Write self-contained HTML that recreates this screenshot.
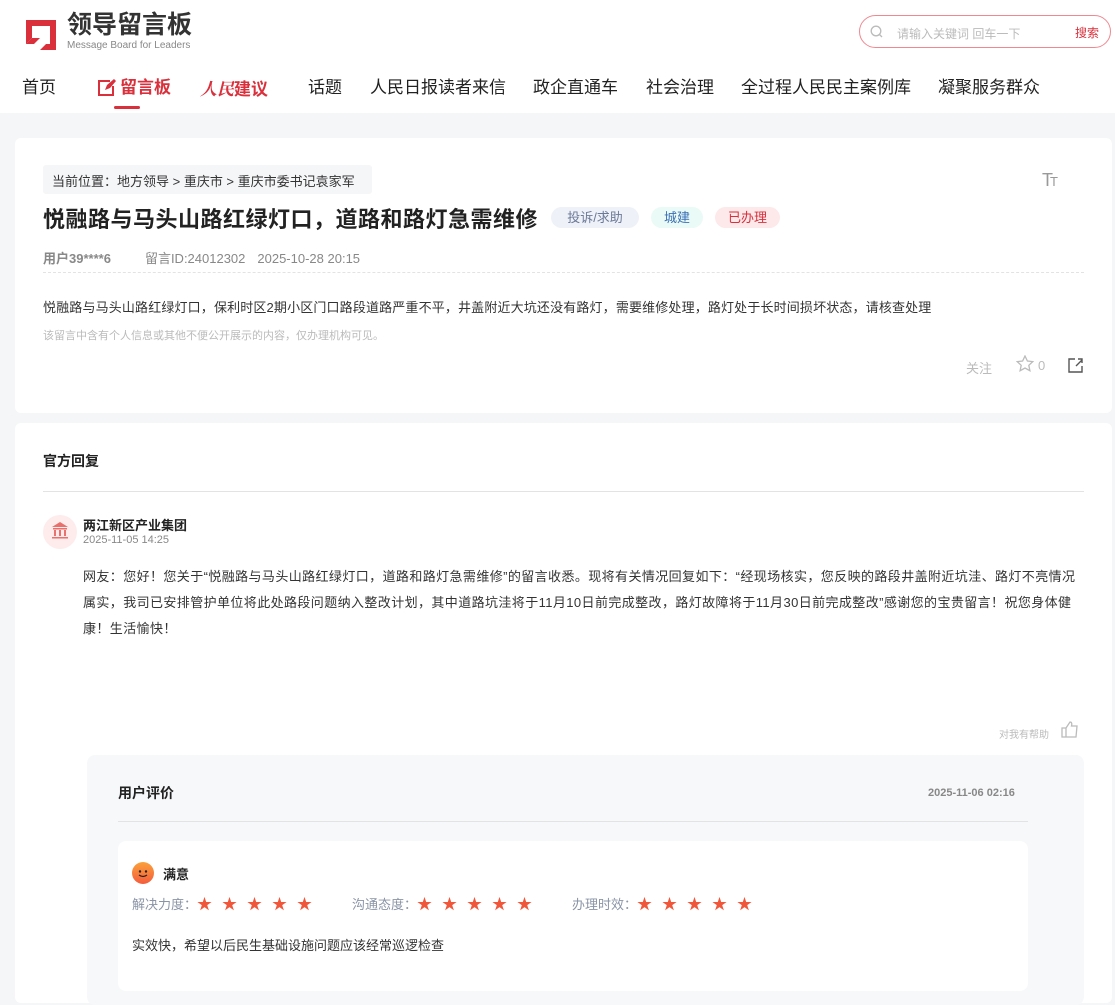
<!DOCTYPE html>
<html><head><meta charset="utf-8"><style>
*{margin:0;padding:0;box-sizing:border-box}
body{width:1115px;height:990px;overflow:hidden;background:#f5f6f8;font-family:"Liberation Sans","Noto Sans CJK SC",sans-serif;color:#333;position:relative}
.abs{position:absolute;white-space:nowrap}
.hdr{position:absolute;left:0;top:0;width:1115px;height:113px;background:#fff}
.nav{font-size:17px;color:#222;top:78px;line-height:20px}
.card{position:absolute;background:#fff;border-radius:6px}
.tag{position:absolute;top:207px;height:21px;border-radius:11px;font-size:13px;line-height:21px;text-align:center}
.star{color:#f0563a;font-size:15px;letter-spacing:10px}
</style></head><body>
<div class="hdr">
<svg class="abs" style="left:22px;top:14px" width="36" height="36" viewBox="0 0 36 36"><path d="M4 6h30v30H18l6-6h4V12H10v12l-6 6z" fill="#d9303c"/><path d="M4 30l6-6h8l-6 6z" fill="#d9303c"/></svg>
<div class="abs" style="left:67px;top:10px;font-size:25px;line-height:30px;font-weight:bold;color:#333">领导留言板</div>
<div class="abs" style="left:67px;top:40px;font-size:10px;line-height:12px;color:#888">Message Board for Leaders</div>
<div class="abs" style="left:859px;top:15px;width:252px;height:33px;border:1px solid #f08890;border-radius:17px"></div>
<svg class="abs" style="left:870px;top:25px" width="13" height="13" viewBox="0 0 13 13"><circle cx="6" cy="6" r="4.8" fill="none" stroke="#bbb" stroke-width="1.3"/><path d="M9.5 9.5l2.5 2.5" stroke="#bbb" stroke-width="1.3"/></svg>
<div class="abs" style="left:897px;top:25px;font-size:12px;color:#bbb">请输入关键词 回车一下</div>
<div class="abs" style="left:1075px;top:24px;font-size:12px;color:#d9303c">搜索</div>
<div class="abs nav" style="left:22px">首页</div>
<svg class="abs" style="left:97px;top:78px" width="21" height="19" viewBox="0 0 21 19"><path d="M13 3H2v14h14V8" fill="none" stroke="#d9303c" stroke-width="2"/><path d="M8 12l2-5 7-6 2 2-6 7z" fill="#d9303c"/></svg>
<div class="abs nav" style="left:120px;color:#d9303c;font-weight:bold">留言板</div>
<div class="abs" style="left:114px;top:106px;width:26px;height:3px;border-radius:2px;background:#d9303c"></div>
<div class="abs nav" style="left:200px;color:#d9303c;font-weight:bold;font-style:italic;font-family:'Noto Serif CJK SC',serif">人民<span style="font-family:'Noto Sans CJK SC',sans-serif;font-style:normal">建议</span></div>
<div class="abs nav" style="left:308px">话题</div>
<div class="abs nav" style="left:370px">人民日报读者来信</div>
<div class="abs nav" style="left:533px">政企直通车</div>
<div class="abs nav" style="left:646px">社会治理</div>
<div class="abs nav" style="left:741px">全过程人民民主案例库</div>
<div class="abs nav" style="left:938px">凝聚服务群众</div>
</div>

<div class="card" style="left:15px;top:138px;width:1097px;height:275px"></div>
<div class="abs" style="left:43px;top:165px;width:329px;height:29px;background:#f5f6f8;border-radius:3px"></div>
<div class="abs" style="left:52px;top:171px;font-size:13px;color:#333">当前位置：地方领导 &gt; 重庆市 &gt; 重庆市委书记袁家军</div>
<div class="abs" style="left:1042px;top:170px;font-size:18px;color:#999;letter-spacing:-3px">T<span style="font-size:13px">T</span></div>
<div class="abs" style="left:43px;top:202px;font-size:22px;font-weight:bold;color:#222;letter-spacing:0.5px">悦融路与马头山路红绿灯口，道路和路灯急需维修</div>
<div class="tag" style="left:551px;width:88px;background:#eef1f7;color:#6b7a99">投诉/求助</div>
<div class="tag" style="left:651px;width:52px;background:#eafaf7;color:#3b6fb6">城建</div>
<div class="tag" style="left:715px;width:65px;background:#fde8ea;color:#d9303c">已办理</div>
<div class="abs" style="left:43px;top:248px;font-size:13px;color:#888"><b>用户39****6</b><span style="margin-left:34px">留言ID:24012302</span><span style="margin-left:12px">2025-10-28 20:15</span></div>
<div class="abs" style="left:43px;top:272px;width:1041px;border-top:1px dashed #e3e3e3"></div>
<div class="abs" style="left:43px;top:297px;font-size:13px;color:#333;letter-spacing:0.15px">悦融路与马头山路红绿灯口，保利时区2期小区门口路段道路严重不平，井盖附近大坑还没有路灯，需要维修处理，路灯处于长时间损坏状态，请核查处理</div>
<div class="abs" style="left:43px;top:327px;font-size:11px;color:#bbb">该留言中含有个人信息或其他不便公开展示的内容，仅办理机构可见。</div>
<div class="abs" style="left:966px;top:358px;font-size:13px;color:#bbb">关注</div>
<svg class="abs" style="left:1016px;top:355px" width="18" height="17" viewBox="0 0 18 17"><path d="M9 1l2.4 5 5.4.6-4 3.7 1.1 5.4L9 13l-4.9 2.7 1.1-5.4-4-3.7 5.4-.6z" fill="none" stroke="#bbb" stroke-width="1.3"/></svg>
<div class="abs" style="left:1038px;top:358px;font-size:13px;color:#bbb">0</div>
<svg class="abs" style="left:1067px;top:357px" width="16" height="16" viewBox="0 0 16 16"><path d="M8 2H2v13h13V9M9 9l6-6M11 2h4v4" fill="none" stroke="#555" stroke-width="1.4"/></svg>

<div class="card" style="left:15px;top:423px;width:1097px;height:580px"></div>
<div class="abs" style="left:43px;top:451px;font-size:14px;font-weight:bold;color:#222">官方回复</div>
<div class="abs" style="left:43px;top:491px;width:1041px;border-top:1px solid #e3e3e3"></div>
<div class="abs" style="left:43px;top:515px;width:34px;height:34px;border-radius:50%;background:#fdeceb"></div>
<svg class="abs" style="left:50px;top:520px" width="20" height="20" viewBox="0 0 20 20"><path d="M10 2L2 7h16z M3 8h14v1.5H3z M4 10h2v6H4z M9 10h2v6H9z M14 10h2v6h-2z M2 17h16v1.5H2z" fill="#e9706c"/></svg>
<div class="abs" style="left:83px;top:515px;font-size:13px;font-weight:bold;color:#222">两江新区产业集团</div>
<div class="abs" style="left:83px;top:534px;font-size:11px;color:#888">2025-11-05 14:25</div>
<div class="abs" style="left:83px;top:564px;width:1004px;white-space:normal;font-size:13px;line-height:26px;color:#333;letter-spacing:0.4px">网友：您好！您关于“悦融路与马头山路红绿灯口，道路和路灯急需维修”的留言收悉。现将有关情况回复如下：“经现场核实，您反映的路段井盖附近坑洼、路灯不亮情况属实，我司已安排管护单位将此处路段问题纳入整改计划，其中道路坑洼将于11月10日前完成整改，路灯故障将于11月30日前完成整改”感谢您的宝贵留言！祝您身体健康！生活愉快！</div>
<div class="abs" style="left:999px;top:726px;font-size:10px;color:#bbb">对我有帮助</div>
<svg class="abs" style="left:1061px;top:721px" width="18" height="17" viewBox="0 0 18 17"><path d="M1 7h4v9H1z M5 7l4-6c2 0 2 2 1.5 4H16l-1 11H5" fill="none" stroke="#bbb" stroke-width="1.3"/></svg>

<div class="abs" style="left:87px;top:755px;width:997px;height:250px;background:#f7f8fa;border-radius:8px"></div>
<div class="abs" style="left:118px;top:783px;font-size:14px;font-weight:bold;color:#222">用户评价</div>
<div class="abs" style="left:928px;top:787px;font-size:11px;font-weight:bold;color:#888">2025-11-06 02:16</div>
<div class="abs" style="left:118px;top:821px;width:910px;border-top:1px solid #e3e3e3"></div>
<div class="abs" style="left:118px;top:841px;width:910px;height:150px;background:#fff;border-radius:8px"></div>
<div class="abs" style="left:132px;top:862px;width:22px;height:22px;border-radius:50%;background:linear-gradient(#fba13a,#f45c3c)"></div>
<svg class="abs" style="left:132px;top:862px" width="22" height="22" viewBox="0 0 22 22"><circle cx="8" cy="9.5" r="1.2" fill="#222"/><circle cx="14" cy="9.5" r="1.2" fill="#222"/><path d="M7 13q4 3 8 0" fill="none" stroke="#222" stroke-width="1.2"/></svg>
<div class="abs" style="left:163px;top:864px;font-size:13px;font-weight:bold;color:#222">满意</div>
<div class="abs" style="left:132px;top:893px;font-size:13px;color:#8a94a6">解决力度：<span class="star">★★★★★</span></div>
<div class="abs" style="left:352px;top:893px;font-size:13px;color:#8a94a6">沟通态度：<span class="star">★★★★★</span></div>
<div class="abs" style="left:572px;top:893px;font-size:13px;color:#8a94a6">办理时效：<span class="star">★★★★★</span></div>
<div class="abs" style="left:132px;top:935px;font-size:13px;color:#333">实效快，希望以后民生基础设施问题应该经常巡逻检查</div>
</body></html>
